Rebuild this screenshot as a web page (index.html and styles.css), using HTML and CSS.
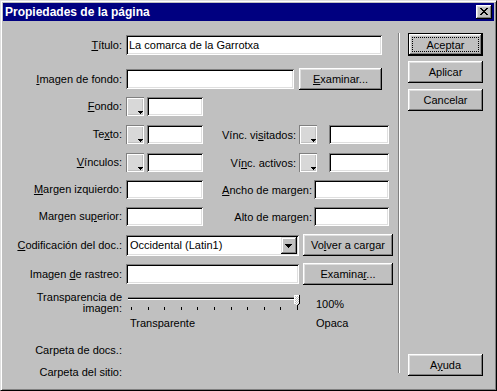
FILE: index.html
```html
<!DOCTYPE html>
<html lang="es">
<head>
    <meta charset="UTF-8">
    <title>Propiedades de la página</title>
    <link rel="stylesheet" href="styles.css">
</head>
<body>
    <div class="window">
        <div class="titlebar">
            <span class="title">Propiedades de la página</span>
            <button class="close" aria-label="Cerrar">
                <svg width="16" height="14" viewBox="0 0 16 14" shape-rendering="crispEdges">
                    <path fill="#000" d="M4 3h2v1h-2z M10 3h2v1h-2z M5 4h2v1h-2z M9 4h2v1h-2z M6 5h4v1h-4z M7 6h2v1h-2z M6 7h4v1h-4z M5 8h2v1h-2z M9 8h2v1h-2z M4 9h2v1h-2z M10 9h2v1h-2z"/>
                </svg>
            </button>
        </div>

        <div class="client">
            <div class="form">
                <!-- titulo -->
                <div class="row r-titulo">
                    <label class="lbl"><u>T</u>ítulo:</label>
                    <div class="field w-titulo">La comarca de la Garrotxa</div>
                </div>

                <div class="row r-fondo-img">
                    <label class="lbl"><u>I</u>magen de fondo:</label>
                    <div class="field w-fondo"></div>
                    <button class="btn b-examinar1"><u>E</u>xaminar...</button>
                </div>

                <!-- colores -->
                <div class="row r-color r-first">
                    <label class="lbl"><u>F</u>ondo:</label>
                    <div class="swatch"><svg width="18" height="19" shape-rendering="crispEdges"><path fill="#000" d="M12 14h5v1h-5z M13 15h3v1h-3z M14 16h1v1h-1z"/></svg></div>
                    <div class="field sm w-color"></div>
                </div>

                <div class="row r-color">
                    <label class="lbl">Te<u>x</u>to:</label>
                    <div class="swatch"><svg width="18" height="19" shape-rendering="crispEdges"><path fill="#000" d="M12 14h5v1h-5z M13 15h3v1h-3z M14 16h1v1h-1z"/></svg></div>
                    <div class="field sm w-color"></div>
                    <label class="lbl2 l-vinc">Vínc. vi<u>s</u>itados:</label>
                    <div class="swatch"><svg width="18" height="19" shape-rendering="crispEdges"><path fill="#000" d="M12 14h5v1h-5z M13 15h3v1h-3z M14 16h1v1h-1z"/></svg></div>
                    <div class="field sm w-color2"></div>
                </div>

                <div class="row r-color">
                    <label class="lbl"><u>V</u>ínculos:</label>
                    <div class="swatch"><svg width="18" height="19" shape-rendering="crispEdges"><path fill="#000" d="M12 14h5v1h-5z M13 15h3v1h-3z M14 16h1v1h-1z"/></svg></div>
                    <div class="field sm w-color"></div>
                    <label class="lbl2 l-vinc">Ví<u>n</u>c. activos:</label>
                    <div class="swatch"><svg width="18" height="19" shape-rendering="crispEdges"><path fill="#000" d="M12 14h5v1h-5z M13 15h3v1h-3z M14 16h1v1h-1z"/></svg></div>
                    <div class="field sm w-color2"></div>
                </div>

                <!-- margenes -->
                <div class="row r-margen r-first-m">
                    <label class="lbl"><u>M</u>argen izquierdo:</label>
                    <div class="field sm w-margen"></div>
                    <label class="lbl2 l-margen"><u>A</u>ncho de margen:</label>
                    <div class="field sm w-margen2"></div>
                </div>

                <div class="row r-margen">
                    <label class="lbl">Margen su<u>p</u>erior:</label>
                    <div class="field sm w-margen"></div>
                    <label class="lbl2 l-margen">Alto de mar<u>g</u>en:</label>
                    <div class="field sm w-margen2"></div>
                </div>

                <div class="row r-wide">
                    <label class="lbl"><u>C</u>odificación del doc.:</label>
                    <div class="field select w-wide">
                        <span class="select-text">Occidental (Latin1)</span>
                        <span class="drop"><svg width="16" height="17" shape-rendering="crispEdges"><path fill="#000" d="M4 7h7v1h-7z M5 8h5v1h-5z M6 9h3v1h-3z M7 10h1v1h-1z"/></svg></span>
                    </div>
                    <button class="btn b-side">Vo<u>l</u>ver a cargar</button>
                </div>

                <div class="row r-wide">
                    <label class="lbl">Imagen <u>d</u>e rastreo:</label>
                    <div class="field w-wide"></div>
                    <button class="btn b-side">Examina<u>r</u>...</button>
                </div>

                <!-- transparencia -->
                <div class="row r-slider">
                    <label class="lbl lbl-2l">Transparencia de<br>imagen:</label>
                    <svg class="slider" width="178" height="22" shape-rendering="crispEdges">
                        <defs>
                            <pattern id="dither" width="2" height="2" patternUnits="userSpaceOnUse">
                                <rect width="2" height="2" fill="#c0c0c0"/>
                                <rect width="1" height="1" fill="#fff"/>
                                <rect x="1" y="1" width="1" height="1" fill="#fff"/>
                            </pattern>
                        </defs>
                        <rect x="2" y="5" width="172" height="1" fill="#808080"/>
                        <rect x="2" y="6" width="172" height="1" fill="#000"/>
                        <rect x="2" y="7" width="172" height="1" fill="#fff"/>
                        <g fill="#000">
                            <rect x="5" y="15" width="1" height="3"/>
                            <rect x="22" y="15" width="1" height="3"/>
                            <rect x="38" y="15" width="1" height="3"/>
                            <rect x="55" y="15" width="1" height="3"/>
                            <rect x="71" y="15" width="1" height="3"/>
                            <rect x="88" y="15" width="1" height="3"/>
                            <rect x="105" y="15" width="1" height="3"/>
                            <rect x="121" y="15" width="1" height="3"/>
                            <rect x="138" y="15" width="1" height="3"/>
                            <rect x="154" y="15" width="1" height="3"/>
                            <rect x="171" y="15" width="1" height="3"/>
                        </g>
                        <polygon points="168,3 174,3 174,12 171,15 168,12" fill="url(#dither)"/>
                        <path d="M168 3h6v1h-6z M168 3h1v9h-1z" fill="#fff"/>
                        <path d="M173 3h1v9h-1z M172 12h1v1h-1z M171 13h1v2h-1z" fill="#000"/>
                    </svg>
                    <span class="value">100%</span>
                </div>

                <div class="row r-caps">
                    <span class="cap-min">Transparente</span>
                    <span>Opaca</span>
                </div>

                <div class="row r-carpeta">
                    <label class="lbl">Carpeta de docs.:</label>
                </div>
                <div class="row r-carpeta2">
                    <label class="lbl">Carpeta del sitio:</label>
                </div>
            </div>

            <div class="sep"></div>

            <div class="side">
                <button class="btn default b-aceptar">Aceptar</button>
                <button class="btn b-aplicar">Aplicar</button>
                <button class="btn b-cancelar">Cancelar</button>
                <button class="btn b-ayuda">A<u>y</u>uda</button>
            </div>
        </div>
    </div>
</body>
</html>
```

FILE: styles.css
```css
/* dialogo estilo windows 98 */
* {
    box-sizing: border-box;
}

body {
    margin: 0;
    font-family: "Liberation Sans", Arial, sans-serif;
    font-size: 11px;
    color: #000;
    background: #c0c0c0;
}

.window {
    width: 497px;
    height: 391px;
    background: #c0c0c0;
    border: 1px solid;
    border-color: #dfdfdf #000 #000 #dfdfdf;
    box-shadow: inset 1px 1px #fff, inset -1px -1px #808080;
    padding: 2px;
}

.titlebar {
    height: 18px;
    background: #000080;
    color: #fff;
    font-weight: bold;
    font-size: 12px;
    display: flex;
    align-items: center;
    justify-content: space-between;
    padding: 0 2px;
}

.close {
    width: 16px;
    height: 14px;
    padding: 0;
    border: 0;
    background: #c0c0c0;
    box-shadow: inset -1px -1px #000, inset 1px 1px #fff, inset -2px -2px #808080, inset 2px 2px #dfdfdf;
    display: block;
}

.close svg {
    display: block;
}

.client {
    display: flex;
    height: 367px;
}

.form {
    width: 395px;
    padding-top: 13px;
    display: flex;
    flex-direction: column;
}

.row {
    display: flex;
    align-items: center;
    flex: none;
}

.lbl {
    width: 119px;
    margin-right: 4px;
    text-align: right;
    white-space: nowrap;
    flex: none;
    line-height: 13px;
}

.lbl2 {
    text-align: right;
    white-space: nowrap;
    flex: none;
}

/* campos */
.field {
    height: 20px;
    line-height: 20px;
    padding: 0 3px;
    background: #fff;
    white-space: nowrap;
    overflow: hidden;
    flex: none;
    box-shadow: inset 1px 1px #808080, inset -1px -1px #fff, inset 2px 2px #000, inset -2px -2px #dfdfdf;
}

.field.sm {
    height: 19px;
}

.swatch {
    width: 18px;
    height: 19px;
    flex: none;
    background: #d8d8d8;
    box-shadow: inset 1px 1px #808080, inset -1px -1px #fff, inset 2px 2px #fff, inset -2px -2px #c0c0c0;
}

.swatch svg {
    display: block;
}

.select {
    height: 21px;
    display: flex;
    align-items: center;
    padding: 2px;
}

.select-text {
    flex: 1;
    padding-left: 2px;
    line-height: 17px;
}

.drop {
    width: 16px;
    height: 17px;
    background: #c0c0c0;
    box-shadow: inset -1px -1px #000, inset 1px 1px #dfdfdf, inset -2px -2px #808080, inset 2px 2px #fff;
}

.drop svg {
    display: block;
}

/* botones */
.btn {
    height: 22px;
    padding: 0;
    border: 0;
    font: inherit;
    color: #000;
    background: #c0c0c0;
    box-shadow: inset -1px -1px #000, inset 1px 1px #fff, inset -2px -2px #808080, inset 2px 2px #dfdfdf;
    flex: none;
    white-space: nowrap;
}

.btn.default {
    box-shadow: inset 0 0 0 1px #000, inset -2px -2px #000, inset 2px 2px #fff, inset -3px -3px #808080, inset 3px 3px #dfdfdf;
    outline: 1px dotted #000;
    outline-offset: -5px;
}

/* filas */
.r-titulo {
    height: 22px;
}

.w-titulo {
    width: 256px;
}

.r-fondo-img {
    height: 22px;
    margin-top: 12px;
}

.w-fondo {
    width: 168px;
}

.b-examinar1 {
    width: 83px;
    margin-left: 5px;
}

.r-color {
    height: 21px;
    margin-top: 7px;
}

.r-first {
    margin-top: 6px;
}

.w-color {
    width: 56px;
    margin-left: 3px;
}

.l-vinc {
    width: 93px;
    margin-right: 3px;
}

.w-color2 {
    width: 60px;
    margin-left: 12px;
}

.r-margen {
    height: 21px;
    margin-top: 6px;
}

.w-margen {
    width: 77px;
}

.l-margen {
    width: 109px;
    margin-right: 2px;
}

.w-margen2 {
    width: 75px;
}

.r-wide {
    height: 22px;
    margin-top: 7px;
}

.w-wide {
    width: 173px;
}

.select.w-wide {
    height: 21px;
}

.b-side {
    width: 90px;
    margin-left: 4px;
}

/* deslizador */
.r-slider {
    height: 22px;
    margin-top: 7px;
    align-items: flex-start;
}

.lbl-2l {
    line-height: 11px;
}

.slider {
    display: block;
    flex: none;
}

.value {
    margin-left: 12px;
    margin-top: 6px;
    line-height: 13px;
}

.r-caps {
    height: 13px;
    margin-top: 3px;
    padding-left: 127px;
    line-height: 13px;
}

.cap-min {
    width: 186px;
}

.r-carpeta {
    height: 13px;
    margin-top: 14px;
}

.r-carpeta2 {
    height: 13px;
    margin-top: 9px;
}

/* separador y botones laterales */
.sep {
    width: 2px;
    height: 340px;
    margin-top: 12px;
    border-left: 1px solid #808080;
    border-right: 1px solid #fff;
    flex: none;
}

.side {
    display: flex;
    flex-direction: column;
    padding: 12px 0 0 8px;
}

.side .btn {
    width: 75px;
}

.b-aceptar {
    height: 23px;
}

.b-aplicar {
    margin-top: 5px;
}

.b-cancelar {
    margin-top: 6px;
}

.b-ayuda {
    margin-top: 243px;
}
```
